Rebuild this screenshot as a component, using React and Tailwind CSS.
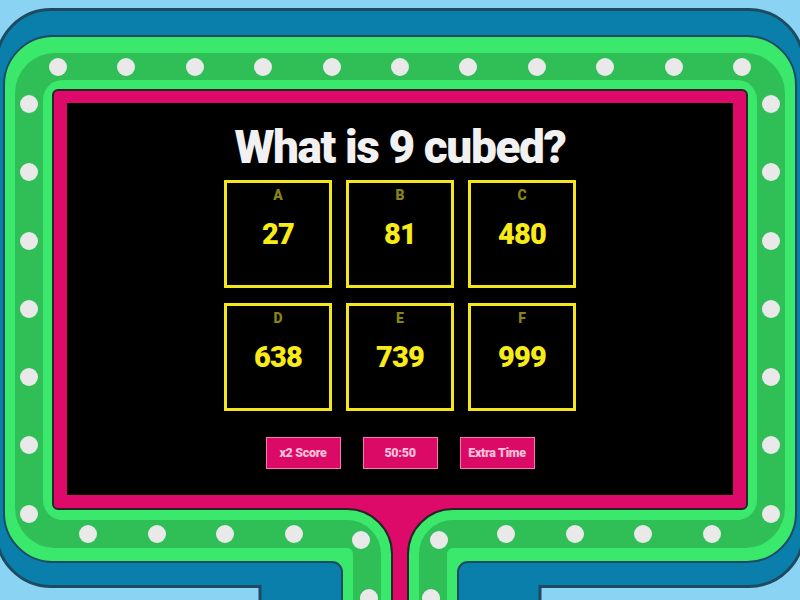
import React from "react";

const answers = [
  { letter: "A", value: "27" },
  { letter: "B", value: "81" },
  { letter: "C", value: "480" },
  { letter: "D", value: "638" },
  { letter: "E", value: "739" },
  { letter: "F", value: "999" },
];

const powerUps = ["x2 Score", "50:50", "Extra Time"];

const Dot = () => <div className="w-[18px] h-[18px] rounded-full bg-[#e9e9e9] shrink-0" />;

const dots = (n) => Array.from({ length: n }, (_, i) => <Dot key={i} />);

// the stand under the board: pink post with the green and blue bands bending round it
const Stem = () => (
  <svg
    className="absolute left-[250px] top-[495px] w-[300px] h-[105px] pointer-events-none"
    viewBox="250 495 300 105"
  >
    <rect x="261" y="583" width="278" height="20" fill="#0a7fac" />
    <path d="M260 585 V603 M540 585 V603" stroke="#1f4b62" strokeWidth="3" fill="none" />
    <path
      d="M310 505 H490 V562 H468 A10 10 0 0 0 458 572 V603 H342 V572 A10 10 0 0 0 332 562 H310 Z"
      fill="#3ae96c"
    />
    <path
      d="M310 562 H332 A10 10 0 0 1 342 572 V603 M490 562 H468 A10 10 0 0 0 458 572 V603"
      stroke="#1f4b62"
      strokeWidth="2"
      fill="none"
    />
    <path
      d="M310 534 H347 A20 20 0 0 1 367 554 V603 M490 534 H453 A20 20 0 0 0 433 554 V603"
      stroke="#2fbf56"
      strokeWidth="28"
      fill="none"
    />
    <path
      d="M310 496 H490 V509 H453 A45 45 0 0 0 408 554 V603 H392 V554 A45 45 0 0 0 347 509 H310 Z"
      fill="#de0a6a"
    />
    <path
      d="M310 509 H347 A45 45 0 0 1 392 554 V603 M490 509 H453 A45 45 0 0 0 408 554 V603"
      stroke="#262626"
      strokeWidth="2"
      fill="none"
    />
    <circle cx="361" cy="540" r="9" fill="#e9e9e9" />
    <circle cx="439" cy="540" r="9" fill="#e9e9e9" />
    <circle cx="369" cy="598" r="9" fill="#e9e9e9" />
    <circle cx="431" cy="598" r="9" fill="#e9e9e9" />
  </svg>
);

export default function App() {
  return (
    <div
      className="relative w-[800px] h-[600px] overflow-hidden bg-[#8ad3f2] pt-[8px]"
      style={{ fontFamily: "Roboto, 'Noto Sans', sans-serif" }}
    >
      {/* blue outer frame */}
      <div className="ml-[-5px] w-[810px] h-[580px] rounded-[56px] border-[3px] border-[#1f4b62] bg-[#0a7fac] pt-[24px] px-[5px] pb-[22px]">
        {/* green light rim */}
        <div className="h-full rounded-[50px] border-2 border-[#1f4b62] bg-[#3ae96c] pt-[16px] px-[10px] pb-[13px]">
          {/* dark green band with the bulbs */}
          <div className="h-full rounded-[40px] bg-[#2fbf56] grid grid-cols-[28px_1fr_28px] grid-rows-[27px_minmax(0,1fr)_28px]">
            <div className="col-span-3 flex items-center justify-between px-[34px]">{dots(11)}</div>

            <div className="flex flex-col items-center gap-[50.3px] pt-[15px]">{dots(7)}</div>

            <div className="rounded-[20px] bg-[#3ae96c] p-[9px] pb-[10px]">
              <div className="h-full rounded-[6px] border-2 border-[#262626] bg-[#de0a6a] px-[13px] pt-[12px] pb-[13px]">
                <div className="h-full bg-black flex flex-col items-center pt-[20px]">
                  <h1 className="text-[46px] leading-[48px] font-black text-[#f1f1f1] tracking-[-1.4px]">
                    What is 9 cubed?
                  </h1>

                  <div className="mt-[9px] grid grid-cols-[108px_108px_108px] gap-x-[14px] gap-y-[15px]">
                    {answers.map((a) => (
                      <div
                        key={a.letter}
                        className="h-[108px] border-[3px] border-[#f5e61b] flex flex-col items-center"
                      >
                        <span className="mt-[5px] text-[14px] leading-[14px] font-black text-[#8a8414]">
                          {a.letter}
                        </span>
                        <span className="mt-[17px] text-[29px] leading-[30px] font-black text-[#f8eb17] tracking-[-0.8px]">
                          {a.value}
                        </span>
                      </div>
                    ))}
                  </div>

                  <div className="mt-[26px] flex gap-[22px]">
                    {powerUps.map((p) => (
                      <button
                        key={p}
                        className="w-[75px] h-[32px] border border-[#f27aae] bg-[#dc0a67] text-[#f8c0d9] text-[12.5px] font-black tracking-[-0.3px] flex items-center justify-center"
                      >
                        {p}
                      </button>
                    ))}
                  </div>
                </div>
              </div>
            </div>

            <div className="flex flex-col items-center gap-[50.3px] pt-[15px]">{dots(7)}</div>

            <div className="col-span-3 flex items-center justify-between px-[64px]">
              <div className="flex gap-[50.7px]">{dots(4)}</div>
              <div className="flex gap-[50.7px]">{dots(4)}</div>
            </div>
          </div>
        </div>
      </div>
      <Stem />
    </div>
  );
}
